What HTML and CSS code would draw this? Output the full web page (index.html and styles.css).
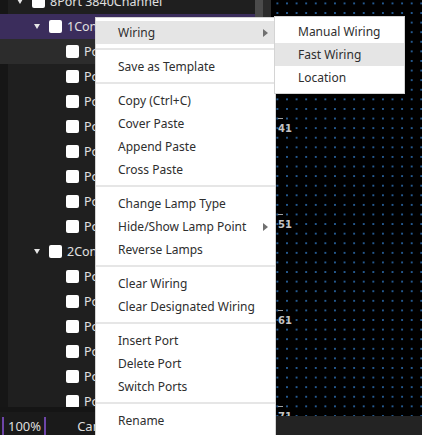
FILE: index.html
```html
<!DOCTYPE html>
<html lang="en">
<head>
    <meta charset="UTF-8">
    <title>Wiring Menu</title>
    <link rel="stylesheet" href="styles.css">
</head>
<body>
    <div class="app">
        <div class="sidebar">
            <div class="tree-area">
                <div class="tree-panel">
                    <div class="tree">
                        <div class="row l0"><span class="caret"></span><span class="check"></span><span class="label">8Port 3840Channel</span></div>
                        <div class="row l1 selected"><span class="caret"></span><span class="check"></span><span class="label">1Controller</span></div>
                        <div class="row l2 hover"><span class="slot"></span><span class="check"></span><span class="label">Port 1</span></div>
                        <div class="row l2"><span class="slot"></span><span class="check"></span><span class="label">Port 2</span></div>
                        <div class="row l2"><span class="slot"></span><span class="check"></span><span class="label">Port 3</span></div>
                        <div class="row l2"><span class="slot"></span><span class="check"></span><span class="label">Port 4</span></div>
                        <div class="row l2"><span class="slot"></span><span class="check"></span><span class="label">Port 5</span></div>
                        <div class="row l2"><span class="slot"></span><span class="check"></span><span class="label">Port 6</span></div>
                        <div class="row l2"><span class="slot"></span><span class="check"></span><span class="label">Port 7</span></div>
                        <div class="row l2"><span class="slot"></span><span class="check"></span><span class="label">Port 8</span></div>
                        <div class="row l1"><span class="caret"></span><span class="check"></span><span class="label">2Controller</span></div>
                        <div class="row l2"><span class="slot"></span><span class="check"></span><span class="label">Port 1</span></div>
                        <div class="row l2"><span class="slot"></span><span class="check"></span><span class="label">Port 2</span></div>
                        <div class="row l2"><span class="slot"></span><span class="check"></span><span class="label">Port 3</span></div>
                        <div class="row l2"><span class="slot"></span><span class="check"></span><span class="label">Port 4</span></div>
                        <div class="row l2"><span class="slot"></span><span class="check"></span><span class="label">Port 5</span></div>
                        <div class="row l2"><span class="slot"></span><span class="check"></span><span class="label">Port 6</span></div>
                    </div>
                </div>
                <div class="scroll"><div class="thumb"></div></div>
            </div>
            <div class="status">
                <span class="zoom">100%</span>
                <span class="canvas-name">Canvas 1</span>
            </div>
        </div>

        <div class="workspace">
            <div class="canvas">
                <div class="ruler">
                    <div class="mark"><span class="tick"></span><span class="num">41</span></div>
                    <div class="mark"><span class="tick"></span><span class="num">51</span></div>
                    <div class="mark"><span class="tick"></span><span class="num">61</span></div>
                    <div class="mark"><span class="tick"></span><span class="num">71</span></div>
                </div>
            </div>
            <div class="bottom-bar"></div>
        </div>

        <!-- right-click menu on the controller node -->
        <div class="context-menu">
            <div class="item active has-sub">Wiring</div>
            <div class="sep"></div>
            <div class="item">Save as Template</div>
            <div class="sep"></div>
            <div class="item">Copy (Ctrl+C)</div>
            <div class="item">Cover Paste</div>
            <div class="item">Append Paste</div>
            <div class="item">Cross Paste</div>
            <div class="sep"></div>
            <div class="item">Change Lamp Type</div>
            <div class="item has-sub">Hide/Show Lamp Point</div>
            <div class="item">Reverse Lamps</div>
            <div class="sep"></div>
            <div class="item">Clear Wiring</div>
            <div class="item">Clear Designated Wiring</div>
            <div class="sep"></div>
            <div class="item">Insert Port</div>
            <div class="item">Delete Port</div>
            <div class="item">Switch Ports</div>
            <div class="sep"></div>
            <div class="item">Rename</div>
        </div>

        <div class="submenu">
            <div class="item">Manual Wiring</div>
            <div class="item active">Fast Wiring</div>
            <div class="item">Location</div>
        </div>
    </div>
</body>
</html>
```

FILE: styles.css
```css
body {
    margin: 0;
    font-family: 'Noto Sans', 'Open Sans', sans-serif;
    background: #141414;
}

.app {
    position: relative;
    width: 422px;
    height: 435px;
    display: flex;
    overflow: hidden;
}

.sidebar {
    width: 271px;
    display: flex;
    flex-direction: column;
    background: #151515;
}

.tree-area {
    flex: 1;
    display: flex;
    min-height: 0;
}

.tree-panel {
    width: 255px;
    height: 407px;
    background: linear-gradient(to right, #161616 8px, #1f1f1f 8px);
    border-radius: 0 0 8px 0;
    overflow: hidden;
}

.tree {
    margin-top: -11px;
}

.row {
    height: 25px;
    display: flex;
    align-items: center;
    color: #e0e0e0;
    font-size: 12.5px;
    white-space: nowrap;
}

.row.l0 { padding-left: 17px; }
.row.l1 { padding-left: 34px; }
.row.l2 { padding-left: 51px; }

.row.selected {
    background: #3b2d5c;
}

.row.hover {
    background: #2c2c2c;
}

.caret, .slot {
    width: 15px;
    flex-shrink: 0;
}

.caret::before {
    content: '';
    display: block;
    width: 0;
    height: 0;
    border-left: 3.5px solid transparent;
    border-right: 3.5px solid transparent;
    border-top: 5px solid #e6e6e6;
}

.check {
    width: 13px;
    height: 13px;
    background: #fff;
    border-radius: 2px;
    margin-right: 5px;
    flex-shrink: 0;
}

.scroll {
    width: 16px;
    background: #2b2b2b;
}

.scroll .thumb {
    width: 8px;
    height: 100%;
    background: #4b4b4b;
}

.status {
    height: 23px;
    display: flex;
    align-items: flex-end;
    font-size: 13px;
    color: #dedede;
    background: #1a1a1a;
}

.zoom {
    margin-left: 2px;
    height: 18px;
    line-height: 18px;
    padding: 0 3px 0 4px;
    border-left: 2px solid #6d45a8;
    border-right: 2px solid #6d45a8;
}

.canvas-name {
    margin-left: 31px;
    height: 18px;
    line-height: 18px;
}

.workspace {
    flex: 1;
    display: flex;
    flex-direction: column;
}

.canvas {
    flex: 1;
    background-color: #000;
    background-image: radial-gradient(circle, #24598f 0.7px, transparent 1.1px);
    background-size: 9.6px 9.6px;
    background-position: 1.6px -1.4px;
    overflow: hidden;
}

.ruler {
    padding: 118px 0 0 7px;
}

.mark {
    height: 96px;
}

.tick {
    display: block;
    width: 5px;
    height: 1px;
    background: #a0a0a0;
}

.num {
    display: block;
    margin-top: 5px;
    font-family: 'DejaVu Sans', sans-serif;
    font-size: 10px;
    font-weight: bold;
    line-height: 10px;
    color: #c4c4c4;
}

.bottom-bar {
    height: 19px;
    background: #232323;
}

/* menus */
.context-menu, .submenu {
    position: absolute;
    background: #fff;
    border: 1px solid #d4d4d4;
    font-size: 12px;
    color: #2e2e2e;
}

.context-menu {
    left: 95px;
    top: 17px;
    width: 179px;
    padding: 3px 0 30px;
}

.submenu {
    left: 274px;
    top: 16px;
    width: 129px;
    padding: 3px 0 4px;
}

.item {
    position: relative;
    height: 23px;
    line-height: 23px;
    padding-left: 23px;
    white-space: nowrap;
}

.context-menu .item {
    padding-left: 22px;
}

.item.active {
    background: #e5e5e5;
}

.item.has-sub::after {
    content: '';
    position: absolute;
    right: 7px;
    top: 8px;
    border-top: 4px solid transparent;
    border-bottom: 4px solid transparent;
    border-left: 5px solid #707070;
}

.sep {
    height: 2px;
    margin: 4px 0 5px;
    background: #e6e6e6;
}
```
